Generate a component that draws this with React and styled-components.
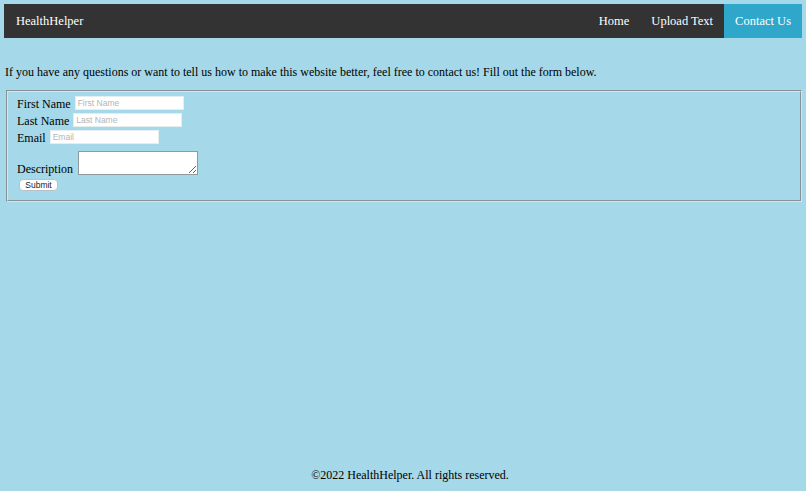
import styled, { createGlobalStyle } from "styled-components"

const Global = createGlobalStyle`
  html, body { height: 100%; }
  body {
    margin: 0;
    background: #a5d8e8;
    font-family: "Liberation Serif", "Times New Roman", serif;
    font-size: 12px;
    color: #000;
  }
  #root { height: 100%; }
`

const Page = styled.div`
  min-height: 100%;
  box-sizing: border-box;
  padding: 4px 4px 0 4px;
  display: flex;
  flex-direction: column;
`

const Nav = styled.nav`
  display: flex;
  align-items: stretch;
  height: 34px;
  background: #333;
  font-size: 12.5px;
`

const Brand = styled.a`
  display: flex;
  align-items: center;
  padding: 0 12px;
  color: #fff;
  text-decoration: none;
  margin-right: auto;
`

const NavLink = styled.a`
  display: flex;
  align-items: center;
  padding: 0 11px;
  color: #fff;
  text-decoration: none;
  background: ${(p) => (p.$active ? "#2fa7ca" : "transparent")};
`

const Intro = styled.p`
  margin: 27px 0 10px 1px;
`

const Fieldset = styled.fieldset`
  margin: 0 0 0 2px;
  width: 796px;
  box-sizing: border-box;
  padding: 3px 9px 8px 9px;
  border: 2px groove #d4e4ea;
`

const Row = styled.div`
  display: flex;
  align-items: flex-end;
  gap: 4px;
  height: 17px;
`

const Input = styled.input`
  width: 109px;
  height: 14px;
  box-sizing: border-box;
  border: 1px solid #e4eef1;
  padding: 0 2px;
  font-family: "Liberation Sans", Arial, sans-serif;
  font-size: 8.5px;
  margin-bottom: 2px;
  background: #fff;
  &::placeholder { color: #b5b5b5; }
`

const TextRow = styled.div`
  display: flex;
  align-items: flex-end;
  gap: 5px;
  margin-top: 5px;
`

const Area = styled.textarea`
  width: 120px;
  height: 24px;
  box-sizing: border-box;
  border: 1px solid #8d9aa0;
  background: #fff;
  resize: both;
  margin: 0 0 2px 0;
`

const Submit = styled.button`
  margin: 1px 0 0 2px;
  width: 39px;
  height: 12px;
  padding: 0;
  border: 1px solid #b8c2c6;
  border-radius: 4px;
  background: #fff;
  font-family: "Liberation Sans", Arial, sans-serif;
  font-size: 8.5px;
  line-height: 10px;
  color: #222;
`

const Footer = styled.footer`
  margin-top: auto;
  text-align: center;
  padding: 0 0 8px 14px;
`

export default function App() {
  return (
    <>
      <Global />
      <Page>
        <Nav>
          <Brand href="#">HealthHelper</Brand>
          <NavLink href="#">Home</NavLink>
          <NavLink href="#">Upload Text</NavLink>
          <NavLink href="#" $active>Contact Us</NavLink>
        </Nav>

        <Intro>
          If you have any questions or want to tell us how to make this website better, feel free to contact us! Fill out the form below.
        </Intro>

        <form onSubmit={(e) => e.preventDefault()}>
          <Fieldset>
            <Row>
              <label>First Name</label>
              <Input placeholder="First Name" />
            </Row>
            <Row>
              <label>Last Name</label>
              <Input placeholder="Last Name" />
            </Row>
            <Row>
              <label>Email</label>
              <Input placeholder="Email" />
            </Row>
            <TextRow>
              <label>Description</label>
              <Area />
            </TextRow>
            <Submit type="submit">Submit</Submit>
          </Fieldset>
        </form>

        <Footer>©2022 HealthHelper. All rights reserved.</Footer>
      </Page>
    </>
  )
}
